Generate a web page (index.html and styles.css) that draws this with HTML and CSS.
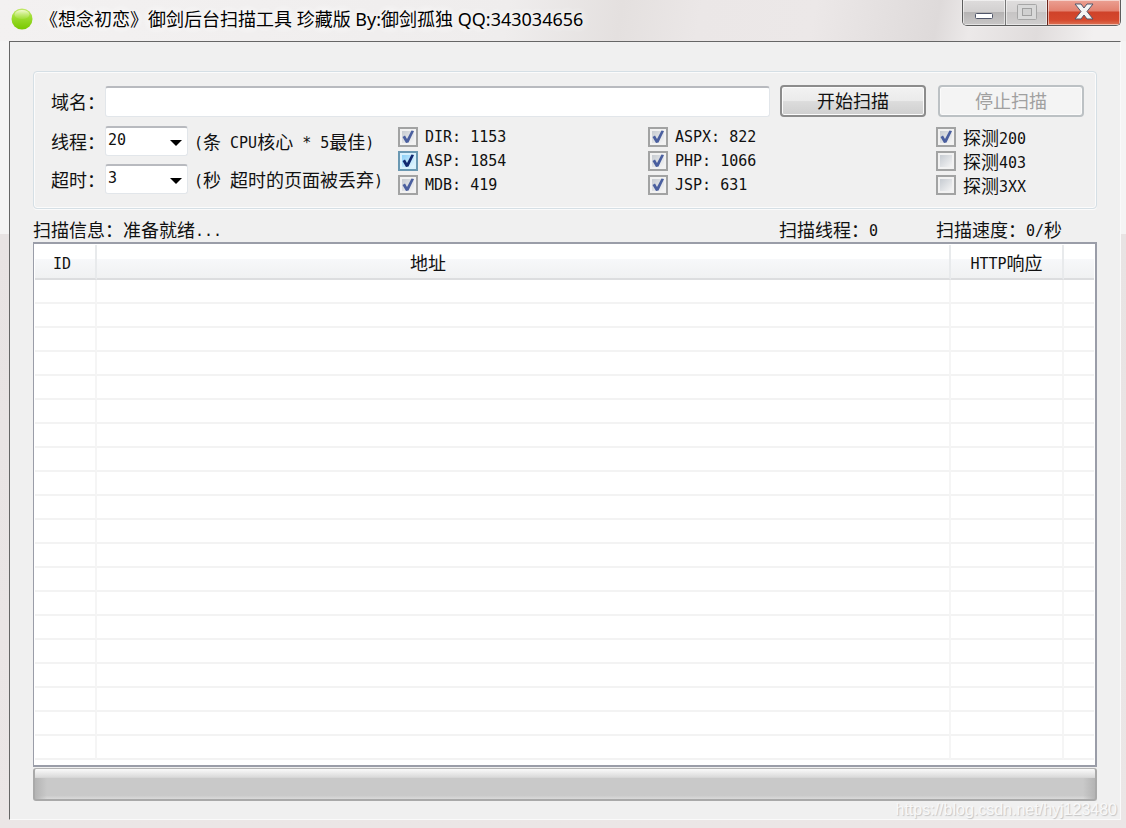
FILE: index.html
```html
<!DOCTYPE html>
<html lang="zh-CN">
<head>
<meta charset="utf-8">
<title>御剑后台扫描工具</title>
<link rel="stylesheet" href="styles.css">
</head>
<body>
<div class="window">
  <header class="titlebar">
    <svg class="app-icon" viewBox="0 0 22 22" aria-hidden="true">
      <defs>
        <linearGradient id="orb" x1="0" y1="0" x2="0" y2="1">
          <stop offset="0" stop-color="#c3e86c"/><stop offset=".45" stop-color="#9bdc2e"/><stop offset="1" stop-color="#78c800"/>
        </linearGradient>
        <linearGradient id="shine" x1="0" y1="0" x2="0" y2="1">
          <stop offset="0" stop-color="#f2fbd0"/><stop offset="1" stop-color="#b8e660" stop-opacity=".3"/>
        </linearGradient>
      </defs>
      <circle cx="11" cy="11" r="10.5" fill="url(#orb)"/>
      <ellipse cx="11" cy="6.5" rx="7.5" ry="4.5" fill="url(#shine)"/>
    </svg>
    <h1 class="title">《想念初恋》御剑后台扫描工具 珍藏版 By:御剑孤独 QQ:343034656</h1>
    <div class="caption-buttons">
      <button class="caption-btn minimize" type="button" aria-label="最小化">
        <svg viewBox="0 0 20 8" width="20" height="8"><rect x="1.5" y="1.5" width="17" height="5" rx="1" fill="#fff" stroke="#50566a"/></svg>
      </button>
      <button class="caption-btn maximize" type="button" aria-label="最大化" disabled>
        <svg viewBox="0 0 20 16" width="20" height="16"><rect x=".5" y=".5" width="19" height="15" rx="1" fill="#d9d9d9" stroke="#a6a6a6"/><rect x="5.5" y="4.5" width="9" height="7" fill="#d0d0d0" stroke="#a0a0a0"/></svg>
      </button>
      <button class="caption-btn close" type="button" aria-label="关闭">
        <svg viewBox="0 0 20 17" width="20" height="17"><path d="M1 1h6l3 4 3-4h6l-6 7.500 6 7.500h-6l-3-4-3 4H1l6-7.500z" fill="#f4f4f4" stroke="#50566a" stroke-linejoin="round"/></svg>
      </button>
    </div>
  </header>

  <main class="client">
    <form class="options">
      <div class="domain-row">
        <label class="field-label" for="domain">域名：</label>
        <input class="domain" id="domain" type="text">
        <button class="btn" type="button">开始扫描</button>
        <button class="btn" type="button" disabled>停止扫描</button>
      </div>
      <div class="settings">
        <div class="combos">
          <div class="combo-row">
            <label class="field-label" for="threads">线程：</label>
            <select class="combo" id="threads"><option>20</option></select>
            <span class="hint"><span class="half">(</span>条<span class="half"> CPU</span>核心<span class="half"> * 5</span>最佳<span class="half">)</span></span>
          </div>
          <div class="combo-row">
            <label class="field-label" for="timeout">超时：</label>
            <select class="combo" id="timeout"><option>3</option></select>
            <span class="hint"><span class="half">(</span>秒<span class="half"> </span>超时的页面被丢弃<span class="half">)</span></span>
          </div>
        </div>
        <div class="checks">
          <label class="check"><input type="checkbox" checked><span class="half">DIR: 1153</span></label>
          <label class="check"><input class="hot" type="checkbox" checked><span class="half">ASP: 1854</span></label>
          <label class="check"><input type="checkbox" checked><span class="half">MDB: 419</span></label>
        </div>
        <div class="checks">
          <label class="check"><input type="checkbox" checked><span class="half">ASPX: 822</span></label>
          <label class="check"><input type="checkbox" checked><span class="half">PHP: 1066</span></label>
          <label class="check"><input type="checkbox" checked><span class="half">JSP: 631</span></label>
        </div>
        <div class="checks">
          <label class="check"><input type="checkbox" checked><span>探测<span class="half">200</span></span></label>
          <label class="check"><input type="checkbox"><span>探测<span class="half">403</span></span></label>
          <label class="check"><input type="checkbox"><span>探测<span class="half">3XX</span></span></label>
        </div>
      </div>
    </form>

    <div class="status">
      <span>扫描信息：准备就绪<span class="half">...</span></span>
      <span>扫描线程：<span class="half">0</span></span>
      <span>扫描速度：<span class="half">0/</span>秒</span>
    </div>

    <div class="list">
      <table class="results">
        <colgroup><col class="col-id"><col><col class="col-http"><col class="col-rest"></colgroup>
        <thead>
          <tr><th><span class="half">ID</span></th><th class="address">地址</th><th><span class="half">HTTP</span>响应</th><th></th></tr>
        </thead>
        <tbody>
          <tr><td></td><td></td><td></td><td></td></tr>
          <tr><td></td><td></td><td></td><td></td></tr>
          <tr><td></td><td></td><td></td><td></td></tr>
          <tr><td></td><td></td><td></td><td></td></tr>
          <tr><td></td><td></td><td></td><td></td></tr>
          <tr><td></td><td></td><td></td><td></td></tr>
          <tr><td></td><td></td><td></td><td></td></tr>
          <tr><td></td><td></td><td></td><td></td></tr>
          <tr><td></td><td></td><td></td><td></td></tr>
          <tr><td></td><td></td><td></td><td></td></tr>
          <tr><td></td><td></td><td></td><td></td></tr>
          <tr><td></td><td></td><td></td><td></td></tr>
          <tr><td></td><td></td><td></td><td></td></tr>
          <tr><td></td><td></td><td></td><td></td></tr>
          <tr><td></td><td></td><td></td><td></td></tr>
          <tr><td></td><td></td><td></td><td></td></tr>
          <tr><td></td><td></td><td></td><td></td></tr>
          <tr><td></td><td></td><td></td><td></td></tr>
          <tr><td></td><td></td><td></td><td></td></tr>
          <tr><td></td><td></td><td></td><td></td></tr>
        </tbody>
      </table>
    </div>
    <div class="progress" role="progressbar" aria-label="扫描进度" aria-valuenow="0"></div>
  </main>
  <span class="watermark">https://blog.csdn.net/hyj123480</span>
</div>
</body>
</html>
```

FILE: styles.css
```css
* { box-sizing: border-box; }

body {
  margin: 0;
  color: #111;
  font: 18px/24px "Noto Sans CJK SC", sans-serif;
}

button, input, select { margin: 0; font: inherit; color: inherit; }

/* Latin text at half the width of a Chinese character */
.half {
  font-family: "DejaVu Sans Mono", monospace;
  font-size: 15px;
  line-height: 20px;
  vertical-align: 1px;
  white-space: pre;
}

.window {
  position: relative;
  display: flex;
  flex-direction: column;
  height: 100vh;
  padding: 0 5px 8px 9px;
  background:
    linear-gradient(100deg, #f3f1f1 0, #efeded 45%, #e4e0df 55%, #ebe7e7 62%, #ece8e8 72%, #dedada 83%, #ece9e9 86%, #e0dcdc 92%, #f2f0f0 97%) top / 100% 41px no-repeat,
    linear-gradient(#f5f4f4 0, #f5f4f4 234px, #e8e3e3 234px, #ebe6e6 100%);
}

.titlebar {
  display: flex;
  flex: none;
  align-items: flex-start;
  height: 41px;
}

.app-icon { flex: none; width: 22px; height: 22px; margin: 8px 7px 0 2px; }

.title {
  flex: 1;
  margin: 7px 0 0;
  color: #000;
  font: 18px/24px "Noto Sans", "Noto Sans CJK SC", sans-serif;
  white-space: nowrap;
  text-shadow: 0 0 8px #fff, 0 0 12px #fff;
}

.caption-buttons {
  display: flex;
  height: 26px;
  border: 1px solid #5d5d5d;
  border-top: 0;
  border-radius: 0 0 5px 5px;
  overflow: hidden;
  box-shadow: 0 0 2px #fff;
}

.caption-btn {
  display: flex;
  justify-content: center;
  align-items: center;
  width: 43px;
  padding: 0 0 2px;
  border: 0;
  background: linear-gradient(#dedcdc 0, #d2d0d0 46%, #b5b3b3 48%, #c8c6c6 100%);
  box-shadow: inset 0 0 0 1px #ffffff88;
}

.minimize { padding-top: 8px; border-right: 1px solid #777; }
.maximize { width: 41px; background: linear-gradient(#dfdddd 0, #d6d4d4 46%, #c6c4c4 48%, #d0cece 100%); }
.close {
  width: 73px;
  border-left: 1px solid #6b241a;
  background: linear-gradient(#eba093 0, #e3816f 44%, #cf4229 48%, #d5482d 80%, #dd7355 100%);
}

.client {
  display: flex;
  flex: 1;
  flex-direction: column;
  min-height: 0;
  padding: 29px 23px 18px;
  border: 1px solid #fafafa;
  border-top-color: #666;
  border-left-color: #666;
  background: #f0f0f0;
}

.options {
  flex: none;
  padding: 13px 12px 11px 17px;
  border: 1px solid #d5dfe5;
  border-radius: 4px;
  box-shadow: inset 0 0 0 1px #fbfbfb, 0 1px #fbfbfb;
}

.domain-row { display: flex; align-items: center; height: 32px; margin-bottom: 8px; }

.field-label { flex: none; width: 54px; }

.domain, .combo {
  border: 1px solid #e2e6ea;
  border-top: 2px solid #b8babf;
  border-radius: 3px;
  background-color: #fff;
}

.domain { flex: 1; min-width: 0; height: 31px; margin: 1px 10px 0 0; padding: 0 4px; }

.btn {
  flex: none;
  width: 146px;
  height: 32px;
  padding: 0 0 2px;
  border: 2px solid #8c8c8c;
  border-radius: 4px;
  background: linear-gradient(#f2f2f2 0, #ebebeb 48%, #dcdcdc 52%, #cfcfcf 100%);
  box-shadow: inset 0 0 0 1px #fbfbfb;
  line-height: 24px;
}
.btn + .btn { margin-left: 12px; }
.btn:disabled { border-color: #bcc1c4; background: #f4f4f4; color: #a0a0a0; }

.settings {
  display: grid;
  grid-template-columns: 347px 250px 1fr 148px;
  align-items: start;
}

.combos { display: grid; gap: 8px; padding-top: 1px; }
.combo-row { display: flex; align-items: center; height: 30px; padding-bottom: 1px; }

.combo {
  appearance: none;
  flex: none;
  width: 83px;
  height: 30px;
  margin-right: 6px;
  padding: 0 20px 2px 2px;
  background-image: url("data:image/svg+xml,%3Csvg xmlns='http://www.w3.org/2000/svg' width='12' height='6'%3E%3Cpath d='M0 0h12L6 6z' fill='%23000'/%3E%3C/svg%3E");
  background-repeat: no-repeat;
  background-position: right 5px top 12px;
  font: 15px/24px "DejaVu Sans Mono", monospace;
}

.hint { white-space: nowrap; }

.check { display: flex; align-items: center; gap: 7px; height: 24px; white-space: nowrap; }

.check input {
  appearance: none;
  flex: none;
  width: 20px;
  height: 20px;
  border: 2px solid #a2a3a3;
  background: linear-gradient(135deg, #c6cbd1, #f5f5f5) center / 12px 12px no-repeat #f2f2f2;
}
.check input:checked {
  background:
    url("data:image/svg+xml,%3Csvg xmlns='http://www.w3.org/2000/svg' width='12' height='14'%3E%3Cpath d='M.5 7L3 5.500 5 9 9.500 .5 12 1 6.500 12.500 4 13z' fill='%234a5f9f'/%3E%3C/svg%3E") center no-repeat,
    linear-gradient(135deg, #c6cbd1, #f5f5f5) center / 12px 12px no-repeat #f2f2f2;
}
.check input.hot {
  border-color: #6a98b2;
  background:
    url("data:image/svg+xml,%3Csvg xmlns='http://www.w3.org/2000/svg' width='12' height='14'%3E%3Cpath d='M.5 7L3 5.500 5 9 9.500 .5 12 1 6.500 12.500 4 13z' fill='%2312286f'/%3E%3C/svg%3E") center no-repeat,
    linear-gradient(135deg, #8bd0f7, #e4f6ff) center / 12px 12px no-repeat #d8f1fd;
}

.status {
  display: grid;
  flex: none;
  grid-template-columns: 1fr 157px 161px;
  align-items: center;
  height: 33px;
  padding-top: 6px;
}

.list {
  flex: 1;
  min-height: 0;
  overflow: hidden;
  padding: 1px;
  border: 2px solid #9a9da8;
  border-left-width: 1px;
  background: #fff;
}

.results { width: 100%; border-collapse: separate; border-spacing: 0; table-layout: fixed; }
.col-id { width: 62px; }
.col-http { width: 113px; }
.col-rest { width: 30px; }

.results th {
  height: 35px;
  padding: 0;
  border-right: 2px solid #e8eaec;
  border-bottom: 2px solid #dcdddf;
  background: linear-gradient(#fff 0, #fff 42%, #f7f8fa 42%, #f0f1f2 100%);
  font-weight: 400;
}
.results th:first-child { padding-right: 6px; }
.results .address { padding-right: 190px; }
.results td {
  height: 24px;
  padding: 0;
  border-right: 2px solid #f5f5f5;
  border-bottom: 2px solid #f3f3f3;
}
.results th:last-child, .results td:last-child { border-right: 0; }

.progress {
  flex: none;
  height: 33px;
  margin-top: 1px;
  border: 2px solid #a9a9a9;
  border-top: 1px solid #b4b4b4;
  border-radius: 3px;
  background:
    linear-gradient(90deg, #b4b4b4 0, #c9c9c900 12px, #c9c9c900 calc(100% - 12px), #b4b4b4 100%) 0 9px no-repeat,
    linear-gradient(#fafafa 0, #d9d9d9 28%, #c9c9c9 30%, #c9c9c9 88%, #dadada 100%);
}

.watermark {
  position: absolute;
  right: 9px;
  bottom: 8px;
  color: #f8f8f8;
  font: 16px/20px "Liberation Sans", sans-serif;
  text-shadow: 1px 1px 1px #c4c4c4;
}
```
